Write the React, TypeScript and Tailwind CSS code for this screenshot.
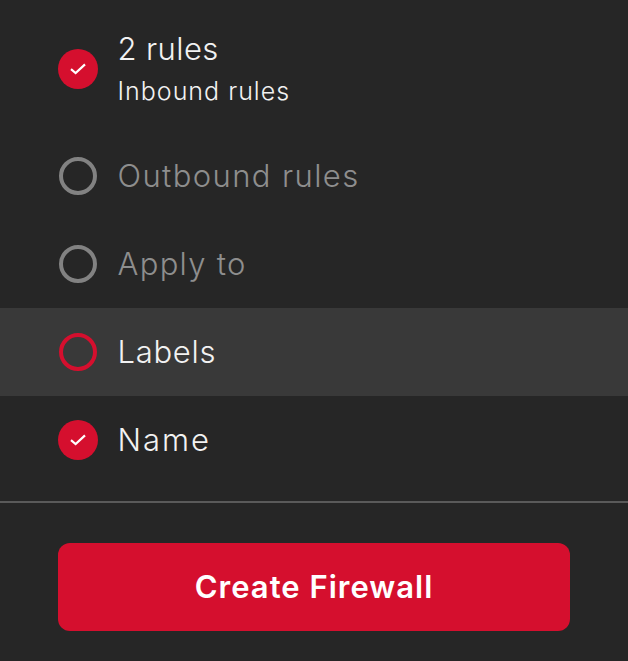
import React from 'react';

const font = { fontFamily: 'Inter, sans-serif' };

function CheckDot() {
  return (
    <div className="flex h-10 w-10 shrink-0 items-center justify-center rounded-full bg-[#d50f2e]">
      <svg width="16" height="12" viewBox="0 0 16 12" fill="none">
        <path d="M1 6.2 L5.6 10 L15 1.4" stroke="#fff" strokeWidth="2.2" />
      </svg>
    </div>
  );
}

function Ring({ color }: { color: string }) {
  return (
    <div className="flex h-10 w-10 shrink-0 items-center justify-center">
      <div className={`h-[38px] w-[38px] rounded-full border-[4px] ${color}`} />
    </div>
  );
}

function Row({ icon, label, className }: { icon: React.ReactNode; label: string; className: string }) {
  return (
    <div className={`flex h-[88px] items-center gap-[19.5px] pl-[58px] text-[31px] font-[350] ${className}`}>
      {icon}
      <span>{label}</span>
    </div>
  );
}

export default function App() {
  return (
    <div className="h-[661px] w-[628px] overflow-hidden bg-[#262626]" style={font}>
      <div className="flex h-[132px] items-start gap-[19.5px] pl-[58px] pt-[49px] text-[#f2f2f2]">
        <CheckDot />
        <div className="-mt-[22px]">
          <div className="text-[31px] font-[350] leading-[44px] tracking-[0.4px]">2 rules</div>
          <div className="text-[25px] font-[350] leading-[41px] tracking-[1px]">Inbound rules</div>
        </div>
      </div>
      <Row icon={<Ring color="border-[#828282]" />} label="Outbound rules" className="tracking-[1.4px] text-[#8e8e8e]" />
      <Row icon={<Ring color="border-[#828282]" />} label="Apply to" className="tracking-[1.3px] text-[#8e8e8e]" />
      <Row icon={<Ring color="border-[#d50f2e]" />} label="Labels" className="bg-[#393939] tracking-[0.7px] text-[#f2f2f2]" />
      <Row icon={<CheckDot />} label="Name" className="tracking-[2px] text-[#f2f2f2]" />
      <div className="mt-[17px] h-[2px] bg-[#5a5a5a]" />
      <div className="px-[58px] pt-[40px]">
        <button className="flex h-[88px] w-[512px] items-center justify-center rounded-xl bg-[#d50f2e] text-[31px] font-semibold tracking-[1px] text-white">
          Create Firewall
        </button>
      </div>
    </div>
  );
}
